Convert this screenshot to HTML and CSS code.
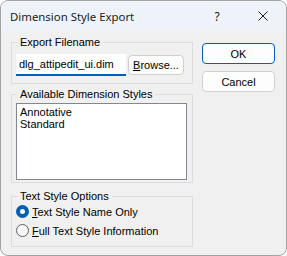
FILE: index.html
```html
<!DOCTYPE html>
<html lang="en">
<head>
  <meta charset="UTF-8">
  <title>Dimension Style Export</title>
  <link rel="stylesheet" href="styles.css">
</head>
<body>
  <div class="window">
    <div class="titlebar">
      <span class="title">Dimension Style Export</span>
      <span class="caption-btn help">?</span>
      <span class="caption-btn close">
        <svg width="10" height="10" viewBox="0 0 10 10"><path d="M0.5 0.5 L9.5 9.5 M9.5 0.5 L0.5 9.5" stroke="#1b1b1b" stroke-width="1" fill="none"/></svg>
      </span>
    </div>
    <div class="client">
      <div class="groups">
        <fieldset class="group group-file">
          <legend>Export Filename</legend>
          <div class="file-row">
            <input type="text" class="filename" value="dlg_attipedit_ui.dim">
            <button class="btn browse"><u>B</u>rowse...</button>
          </div>
        </fieldset>
        <fieldset class="group group-styles">
          <legend>Available Dimension Styles</legend>
          <div class="listbox">
            <div>Annotative</div>
            <div>Standard</div>
          </div>
        </fieldset>
        <fieldset class="group group-text">
          <legend>Text Style Options</legend>
          <label class="radio-row"><span class="radio checked"></span><span><u>T</u>ext Style Name Only</span></label>
          <label class="radio-row"><span class="radio"></span><span><u>F</u>ull Text Style Information</span></label>
        </fieldset>
      </div>
      <div class="actions">
        <button class="btn default">OK</button>
        <button class="btn">Cancel</button>
      </div>
    </div>
  </div>
</body>
</html>
```

FILE: styles.css
```css
html, body {
  margin: 0;
  padding: 0;
  background: #ffffff;
}
.window {
  width: 287px;
  height: 256px;
  box-sizing: border-box;
  border: 1px solid #a3a3a3;
  border-radius: 8px;
  overflow: hidden;
  background: #f0f0f0;
  font-family: 'Liberation Sans', Arial, sans-serif;
  font-size: 11px;
  color: #000;
}
.titlebar {
  height: 30px;
  display: flex;
  align-items: center;
  background: #eef3f9;
  font-family: 'Noto Sans', sans-serif;
  font-size: 11.4px;
  color: #1b1b1b;
}
.title {
  flex: 1;
  padding-left: 9px;
}
.caption-btn {
  width: 46px;
  height: 30px;
  display: flex;
  align-items: center;
  justify-content: center;
}
.help {
  font-size: 12px;
}
.client {
  display: flex;
  padding-left: 10px;
}
.groups {
  width: 182px;
}
.group {
  margin: 0;
  min-width: 0;
  border: 1px solid #dcdcdc;
  padding: 0 4px;
}
.group legend {
  line-height: 14px;
  padding: 0 3px;
  margin-left: 1px;
}
.group-file {
  margin-top: 4px;
  padding-top: 5px;
  padding-bottom: 7px;
}
.group-styles {
  margin-top: 3px;
  padding-top: 2px;
  padding-bottom: 2px;
}
.group-text {
  margin-top: 6px;
  padding-bottom: 5px;
}
.file-row {
  display: flex;
  align-items: center;
  gap: 2px;
}
.filename {
  width: 110px;
  height: 22px;
  box-sizing: border-box;
  border: none;
  border-bottom: 2px solid #005fb8;
  background: #fff;
  padding: 0 3px;
  margin: 0;
  font-family: inherit;
  font-size: 11px;
  outline: none;
}
.btn {
  font-family: inherit;
  font-size: 11px;
  color: #000;
  background: #fdfdfd;
  border: 1px solid #d0d0d0;
  border-radius: 4px;
  padding: 0;
  margin: 0;
}
.browse {
  width: 56px;
  height: 20px;
}
.listbox {
  width: 171px;
  height: 77px;
  box-sizing: border-box;
  border: 1px solid #828790;
  background: #fff;
  padding: 2px 3px;
  line-height: 12px;
}
.radio-row {
  display: flex;
  align-items: center;
  height: 17px;
  margin-bottom: 2px;
}
.radio {
  width: 13px;
  height: 13px;
  box-sizing: border-box;
  border: 1px solid #5f5f5f;
  border-radius: 50%;
  background: #f6f6f6;
  margin-right: 3px;
}
.radio.checked {
  border: 4px solid #005fb8;
  background: #fff;
}
.actions {
  display: flex;
  flex-direction: column;
  gap: 7px;
  margin-left: 9px;
  padding-top: 12px;
}
.actions .btn {
  width: 73px;
  height: 21px;
}
.btn.default {
  border-color: #005fb8;
}
```
